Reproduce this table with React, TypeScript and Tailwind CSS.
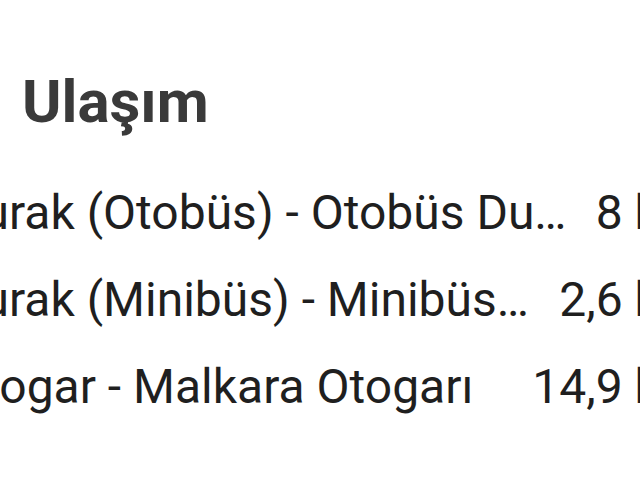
import React from "react";

type Item = { label: string; distance: string };

// labels as the list shows them, already shortened
const ITEMS: Item[] = [
  { label: "Durak (Otobüs) - Otobüs Du…", distance: "8 km" },
  { label: "Durak (Minibüs) - Minibüs…", distance: "2,6 km" },
  { label: "Otogar - Malkara Otogarı", distance: "14,9 km" },
];

export default function App() {
  return (
    <div className="w-[640px] h-[480px] overflow-hidden bg-white font-['Roboto',sans-serif]">
      <div className="ml-[-49px] w-[750px] pt-[72px]">
        <h2 className="pl-[71px] text-[60px] leading-none font-bold text-[#3a3a3a]">Ulaşım</h2>
        <ul className="mt-[37px]">
          {ITEMS.map((item) => (
            <li key={item.label} className="flex h-[87px] items-center text-[48px] leading-[87px] text-[#1f1f1f]">
              <span className="min-w-0 flex-1 whitespace-nowrap">{item.label}</span>
              <span className="ml-[24px] shrink-0 text-right">{item.distance}</span>
            </li>
          ))}
        </ul>
      </div>
    </div>
  );
}
